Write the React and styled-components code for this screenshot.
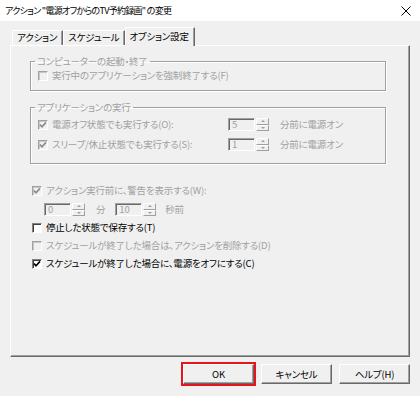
import React from "react";
import styled, { createGlobalStyle } from "styled-components";

const FONT = `"Noto Sans CJK JP", "Noto Sans", sans-serif`;
const DIS = "#a0a0a0";

const Global = createGlobalStyle`
  html, body { margin: 0; padding: 0; background: #f0f0f0; }
  body {
    font-family: ${FONT};
    font-size: 9.5px;
    letter-spacing: -0.2px;
    font-feature-settings: "palt";
    color: #000;
  }
  * { box-sizing: border-box; }
`;

const Window = styled.div`
  width: 420px;
  height: 396px;
  display: flex;
  flex-direction: column;
  background: #f0f0f0;
  overflow: hidden;
`;

const TitleBar = styled.div`
  height: 21px;
  flex: none;
  background: #fff;
  display: flex;
  align-items: center;
  justify-content: space-between;
  padding: 0 9px 0 5px;
`;

const Title = styled.span`
  font-size: 9px;
  letter-spacing: -0.7px;
  line-height: 1;
  white-space: pre;
`;

const Body = styled.div`
  padding: 6px 10px 0 10px;
  display: flex;
  flex-direction: column;
`;

const TabRow = styled.div`
  display: flex;
  align-items: flex-end;
  height: 18px;
  padding-left: 2px;
  position: relative;
  z-index: 1;
`;

const Tab = styled.div`
  height: ${(p) => (p.$active ? 19 : 15)}px;
  margin-bottom: ${(p) => (p.$active ? -1 : 0)}px;
  padding: 0 5px 0 ${(p) => (p.$active ? 3 : 4)}px;
  display: flex;
  align-items: center;
  line-height: 1;
  background: #f0f0f0;
  border-top: 1px solid #fff;
  border-left: 1px solid #fff;
  border-right: 1px solid #696969;
  box-shadow: inset -1px 0 0 #a0a0a0;
  white-space: nowrap;
`;

const Panel = styled.div`
  height: 312px;
  border-top: 1px solid #fff;
  border-left: 1px solid #fff;
  border-right: 1px solid #696969;
  border-bottom: 1px solid #696969;
  box-shadow: inset -1px -1px 0 #a0a0a0;
  padding: 9px 0 0 19px;
  display: flex;
  flex-direction: column;
`;

const Group = styled.fieldset`
  margin: ${(p) => p.$mt || 0}px 0 0 0;
  width: 356px;
  min-width: 0;
  padding: ${(p) => p.$pt || 0}px 0 ${(p) => p.$pb || 0}px 7px;
  border: 1px solid #a0a0a0;
  box-shadow: 1px 1px 0 #fff, inset 1px 1px 0 #fff;
  display: flex;
  flex-direction: column;
  gap: ${(p) => p.$gap || 0}px;
`;

const Legend = styled.legend`
  padding: 0 2px;
  margin-left: -3px;
  line-height: 13px;
  color: ${DIS};
`;

const Row = styled.div`
  display: flex;
  align-items: center;
  height: ${(p) => p.$h || 15}px;
  margin-top: ${(p) => p.$mt || 0}px;
  margin-left: ${(p) => p.$ml || 0}px;
`;

const CheckLabel = styled.label`
  display: flex;
  align-items: center;
  gap: 4px;
  width: ${(p) => (p.$w ? `${p.$w}px` : "auto")};
  color: ${(p) => (p.$disabled ? DIS : "#000")};
  line-height: 1;
  white-space: nowrap;
`;

const Box = styled.span`
  flex: none;
  width: 10px;
  height: 10px;
  display: flex;
  align-items: center;
  justify-content: center;
  background: ${(p) => (p.$disabled ? "#f0f0f0" : "#fff")};
  border-top: 1px solid ${(p) => (p.$disabled ? "#a0a0a0" : "#808080")};
  border-left: 1px solid ${(p) => (p.$disabled ? "#a0a0a0" : "#808080")};
  border-right: 1px solid #fff;
  border-bottom: 1px solid #fff;
  box-shadow: inset 1px 1px 0 ${(p) => (p.$disabled ? "#c8c8c8" : "#404040")};
`;

const Check = ({ checked, disabled, children, width }) => (
  <CheckLabel $disabled={disabled} $w={width}>
    <Box $disabled={disabled}>
      {checked && (
        <svg width="8" height="8" viewBox="0 0 8 8">
          <polyline
            points="1,3.6 3,5.8 7,1.4"
            fill="none"
            stroke={disabled ? "#8a8a8a" : "#000"}
            strokeWidth="1.6"
          />
        </svg>
      )}
    </Box>
    <span>{children}</span>
  </CheckLabel>
);

const SpinWrap = styled.div`
  display: flex;
  align-items: center;
  gap: 1px;
  margin-left: ${(p) => p.$ml || 0}px;
`;

const Edit = styled.div`
  width: 27px;
  height: 13px;
  background: #f0f0f0;
  border-top: 1px solid #a0a0a0;
  border-left: 1px solid #a0a0a0;
  border-right: 1px solid #fff;
  border-bottom: 1px solid #fff;
  box-shadow: inset 1px 1px 0 #696969;
  color: ${DIS};
  font-size: 9.5px;
  line-height: 11px;
  padding-left: 3px;
`;

const Spinner = styled.div`
  width: 13px;
  height: 13px;
  display: flex;
  flex-direction: column;
`;

const SpinHalf = styled.div`
  flex: 1;
  display: flex;
  align-items: center;
  justify-content: center;
  background: #f0f0f0;
  border-top: 1px solid #fff;
  border-left: 1px solid #fff;
  border-right: 1px solid #a0a0a0;
  border-bottom: 1px solid #a0a0a0;
`;

const Arrow = styled.span`
  width: 0;
  height: 0;
  border-left: 2px solid transparent;
  border-right: 2px solid transparent;
  ${(p) =>
    p.$up
      ? `border-bottom: 2px solid ${DIS};`
      : `border-top: 2px solid ${DIS};`}
`;

const Spin = ({ value, ml }) => (
  <SpinWrap $ml={ml}>
    <Edit>{value}</Edit>
    <Spinner>
      <SpinHalf>
        <Arrow $up />
      </SpinHalf>
      <SpinHalf>
        <Arrow />
      </SpinHalf>
    </Spinner>
  </SpinWrap>
);

const Unit = styled.span`
  color: ${DIS};
  line-height: 1;
  margin-left: ${(p) => p.$ml || 0}px;
  white-space: nowrap;
`;

const ButtonRow = styled.div`
  display: flex;
  justify-content: flex-end;
  gap: 7px;
  margin-top: 7px;
`;

const Button = styled.button`
  width: 71px;
  height: 20px;
  padding: 0;
  font-family: ${FONT};
  font-size: 9.5px;
  letter-spacing: -0.2px;
  font-feature-settings: "palt";
  color: #000;
  background: #f0f0f0;
  border-top: 1px solid #fff;
  border-left: 1px solid #fff;
  border-right: 1px solid #696969;
  border-bottom: 1px solid #696969;
  box-shadow: inset -1px -1px 0 #a0a0a0;
  outline: ${(p) => (p.$highlight ? "2px solid #e5141f" : "none")};
  outline-offset: 0px;
`;

export default function App() {
  return (
    <>
      <Global />
      <Window>
        <TitleBar>
          <Title>{'アクション "電源オフからのTV予約録画" の変更'}</Title>
          <svg width="10" height="10" viewBox="0 0 10 10">
            <path d="M0.5 0.5 L9.5 9.5 M9.5 0.5 L0.5 9.5" stroke="#000" strokeWidth="1" />
          </svg>
        </TitleBar>
        <Body>
          <TabRow>
            <Tab>アクション</Tab>
            <Tab>スケジュール</Tab>
            <Tab $active>オプション設定</Tab>
          </TabRow>
          <Panel>
            <Group $pb={7}>
              <Legend>コンピューターの起動・終了</Legend>
              <Row>
                <Check disabled>実行中のアプリケーションを強制終了する(F)</Check>
              </Row>
            </Group>
            <Group $mt={10} $pt={3} $pb={11} $gap={5}>
              <Legend>アプリケーションの実行</Legend>
              <Row>
                <Check disabled checked width={190}>
                  電源オフ状態でも実行する(O):
                </Check>
                <Spin value="5" />
                <Unit $ml={11}>分前に電源オン</Unit>
              </Row>
              <Row>
                <Check disabled checked width={190}>
                  スリープ/休止状態でも実行する(S):
                </Check>
                <Spin value="1" />
                <Unit $ml={11}>分前に電源オン</Unit>
              </Row>
            </Group>
            <Row $mt={19} $ml={2}>
              <Check disabled checked>
                アクション実行前に、警告を表示する(W):
              </Check>
            </Row>
            <Row $mt={4} $ml={14}>
              <Spin value="0" />
              <Unit $ml={11}>分</Unit>
              <Spin value="10" ml={10} />
              <Unit $ml={9}>秒前</Unit>
            </Row>
            <Row $mt={2} $ml={2} $h={18}>
              <Check>停止した状態で保存する(T)</Check>
            </Row>
            <Row $ml={2} $h={18}>
              <Check disabled>スケジュールが終了した場合は、アクションを削除する(D)</Check>
            </Row>
            <Row $ml={2} $h={18}>
              <Check checked>スケジュールが終了した場合に、電源をオフにする(C)</Check>
            </Row>
          </Panel>
          <ButtonRow>
            <Button $highlight>OK</Button>
            <Button>キャンセル</Button>
            <Button>ヘルプ(H)</Button>
          </ButtonRow>
        </Body>
      </Window>
    </>
  );
}
